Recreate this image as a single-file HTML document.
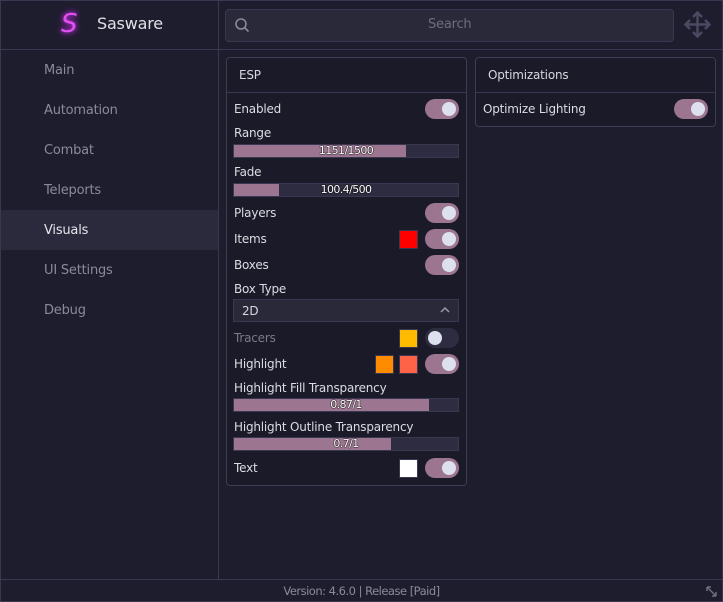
<!DOCTYPE html>
<html><head><style>
*{box-sizing:border-box;margin:0;padding:0}
body{width:723px;height:602px;background:#1e1d2d;font-family:"DejaVu Sans","Liberation Sans",sans-serif;color:#d8d8e0;position:relative;overflow:hidden;font-size:12px;letter-spacing:-0.2px}
.a{position:absolute}
.hl{background:#3a3850}
.nav{position:absolute;left:44px;font-size:13px;color:#8a8a9a}
.panel{position:absolute;background:#1b1a28;border:1px solid #3e3c52;border-radius:4px}
.lbl{position:absolute;left:7px;font-size:12px;color:#dcdce4}
.tg{position:absolute;width:34px;height:20px;border-radius:10px;background:#9c7590}
.tg::after{content:"";position:absolute;right:3px;top:3px;width:14px;height:14px;border-radius:50%;background:#dde0ef}
.tg.off{background:#2e2c40}
.tg.off::after{right:auto;left:3px}
.sl{position:absolute;left:6px;width:226px;height:14px;background:#2e2c40;border:1px solid #3a3850}
.sl div{height:100%;background:#9c7590}
.sl span{position:absolute;left:0;right:0;top:-1px;text-align:center;font-size:11px;color:#fff;letter-spacing:-0.6px;text-shadow:0 0 1px #000,0 0 1px #000,0 0 1px #000}
.sw{position:absolute;width:19px;height:19px;border:1px solid #3a3850}
</style></head><body>
<div class="a hl" style="left:0;top:0;width:723px;height:1px"></div>
<div class="a hl" style="left:0;top:0;width:1px;height:602px"></div>
<div class="a hl" style="right:0;top:0;width:1px;height:602px"></div>
<div class="a hl" style="left:218px;top:0;width:1px;height:579px"></div>
<div class="a hl" style="left:0;top:49px;width:723px;height:1px"></div>
<div class="a hl" style="left:0;top:579px;width:723px;height:1px"></div>
<div class="a hl" style="left:0;top:601px;width:723px;height:1px"></div>
<div class="a" style="left:61px;top:9px;font-size:26px;font-style:italic;color:#e050f0;text-shadow:0 0 5px #c030e0,0 0 8px #a020c0">S</div>
<div class="a" style="left:97px;top:14px;font-size:16px;color:#e0e0e8">Sasware</div>
<div class="a" style="left:225px;top:9px;width:449px;height:33px;background:#2a2939;border:1px solid #3a3850;border-radius:4px"></div>
<svg class="a" style="left:234px;top:17px" width="16" height="16" viewBox="0 0 16 16"><circle cx="7" cy="7" r="5" fill="none" stroke="#8a8a9a" stroke-width="1.6"/><path d="M11 11l3.5 3.5" stroke="#8a8a9a" stroke-width="1.6"/></svg>
<div class="a" style="left:428px;top:17px;font-size:13px;color:#6e6c80">Search</div>
<svg class="a" style="left:684px;top:11px" width="27" height="27" viewBox="0 0 27 27" fill="none" stroke="#4c4a62" stroke-width="2.4"><path d="M13.5 2v23M2 13.5h23"/><path d="M9 6l4.5-4.5L18 6M9 21l4.5 4.5L18 21M6 9l-4.5 4.5L6 18M21 9l4.5 4.5L21 18"/></svg>
<div class="nav" style="top:63px">Main</div>
<div class="nav" style="top:103px">Automation</div>
<div class="nav" style="top:143px">Combat</div>
<div class="nav" style="top:183px">Teleports</div>
<div class="a" style="left:1px;top:210px;width:217px;height:40px;background:#2b2a3c"></div>
<div class="nav" style="top:223px;color:#e6e6ee">Visuals</div>
<div class="nav" style="top:263px">UI Settings</div>
<div class="nav" style="top:303px">Debug</div>

<div class="panel" style="left:226px;top:57px;width:241px;height:429px">
<div class="a" style="left:12px;top:10px;font-size:12px">ESP</div>
<div class="a hl" style="left:0;top:34px;width:239px;height:1px"></div>
<div class="lbl" style="top:44px">Enabled</div><div class="tg" style="left:198px;top:41px"></div>
<div class="lbl" style="top:68px">Range</div>
<div class="sl" style="top:86px"><div style="width:77%"></div><span>1151/1500</span></div>
<div class="lbl" style="top:107px">Fade</div>
<div class="sl" style="top:125px"><div style="width:20%"></div><span>100.4/500</span></div>
<div class="lbl" style="top:148px">Players</div><div class="tg" style="left:198px;top:145px"></div>
<div class="lbl" style="top:174px">Items</div><div class="sw" style="left:172px;top:172px;background:#ff0000"></div><div class="tg" style="left:198px;top:171px"></div>
<div class="lbl" style="top:200px">Boxes</div><div class="tg" style="left:198px;top:197px"></div>
<div class="lbl" style="top:224px">Box Type</div>
<div class="a" style="left:6px;top:241px;width:226px;height:23px;background:#2a2939;border:1px solid #3a3850"></div>
<div class="a" style="left:15px;top:246px;font-size:12px">2D</div>
<svg class="a" style="left:213px;top:248px" width="10" height="8" viewBox="0 0 10 8"><path d="M1 6l4-4 4 4" fill="none" stroke="#9a9aa8" stroke-width="1.5"/></svg>
<div class="lbl" style="top:273px;color:#7a7a8a">Tracers</div><div class="sw" style="left:172px;top:271px;background:#ffbb00"></div><div class="tg off" style="left:198px;top:270px"></div>
<div class="lbl" style="top:299px">Highlight</div><div class="sw" style="left:148px;top:297px;background:#ff8c00"></div><div class="sw" style="left:172px;top:297px;background:#ff6347"></div><div class="tg" style="left:198px;top:296px"></div>
<div class="lbl" style="top:323px">Highlight Fill Transparency</div>
<div class="sl" style="top:340px"><div style="width:87%"></div><span>0.87/1</span></div>
<div class="lbl" style="top:362px">Highlight Outline Transparency</div>
<div class="sl" style="top:379px"><div style="width:70%"></div><span>0.7/1</span></div>
<div class="lbl" style="top:403px">Text</div><div class="sw" style="left:172px;top:401px;background:#fff"></div><div class="tg" style="left:198px;top:400px"></div>
</div>

<div class="panel" style="left:475px;top:57px;width:241px;height:70px">
<div class="a" style="left:12px;top:10px;font-size:12px">Optimizations</div>
<div class="a hl" style="left:0;top:34px;width:239px;height:1px"></div>
<div class="lbl" style="top:44px">Optimize Lighting</div><div class="tg" style="left:198px;top:41px"></div>
</div>

<div class="a" style="left:0;top:584px;width:723px;text-align:center;font-size:11.5px;letter-spacing:-0.5px;color:#8a8a9a">Version: 4.6.0 | Release [Paid]</div>
<svg class="a" style="left:705px;top:585px" width="13" height="13" viewBox="0 0 13 13" fill="none" stroke="#6e6c80" stroke-width="1.5"><path d="M2 2l9 9M2 2h4M2 2v4M11 11H7M11 11V7"/></svg>
</body></html>
